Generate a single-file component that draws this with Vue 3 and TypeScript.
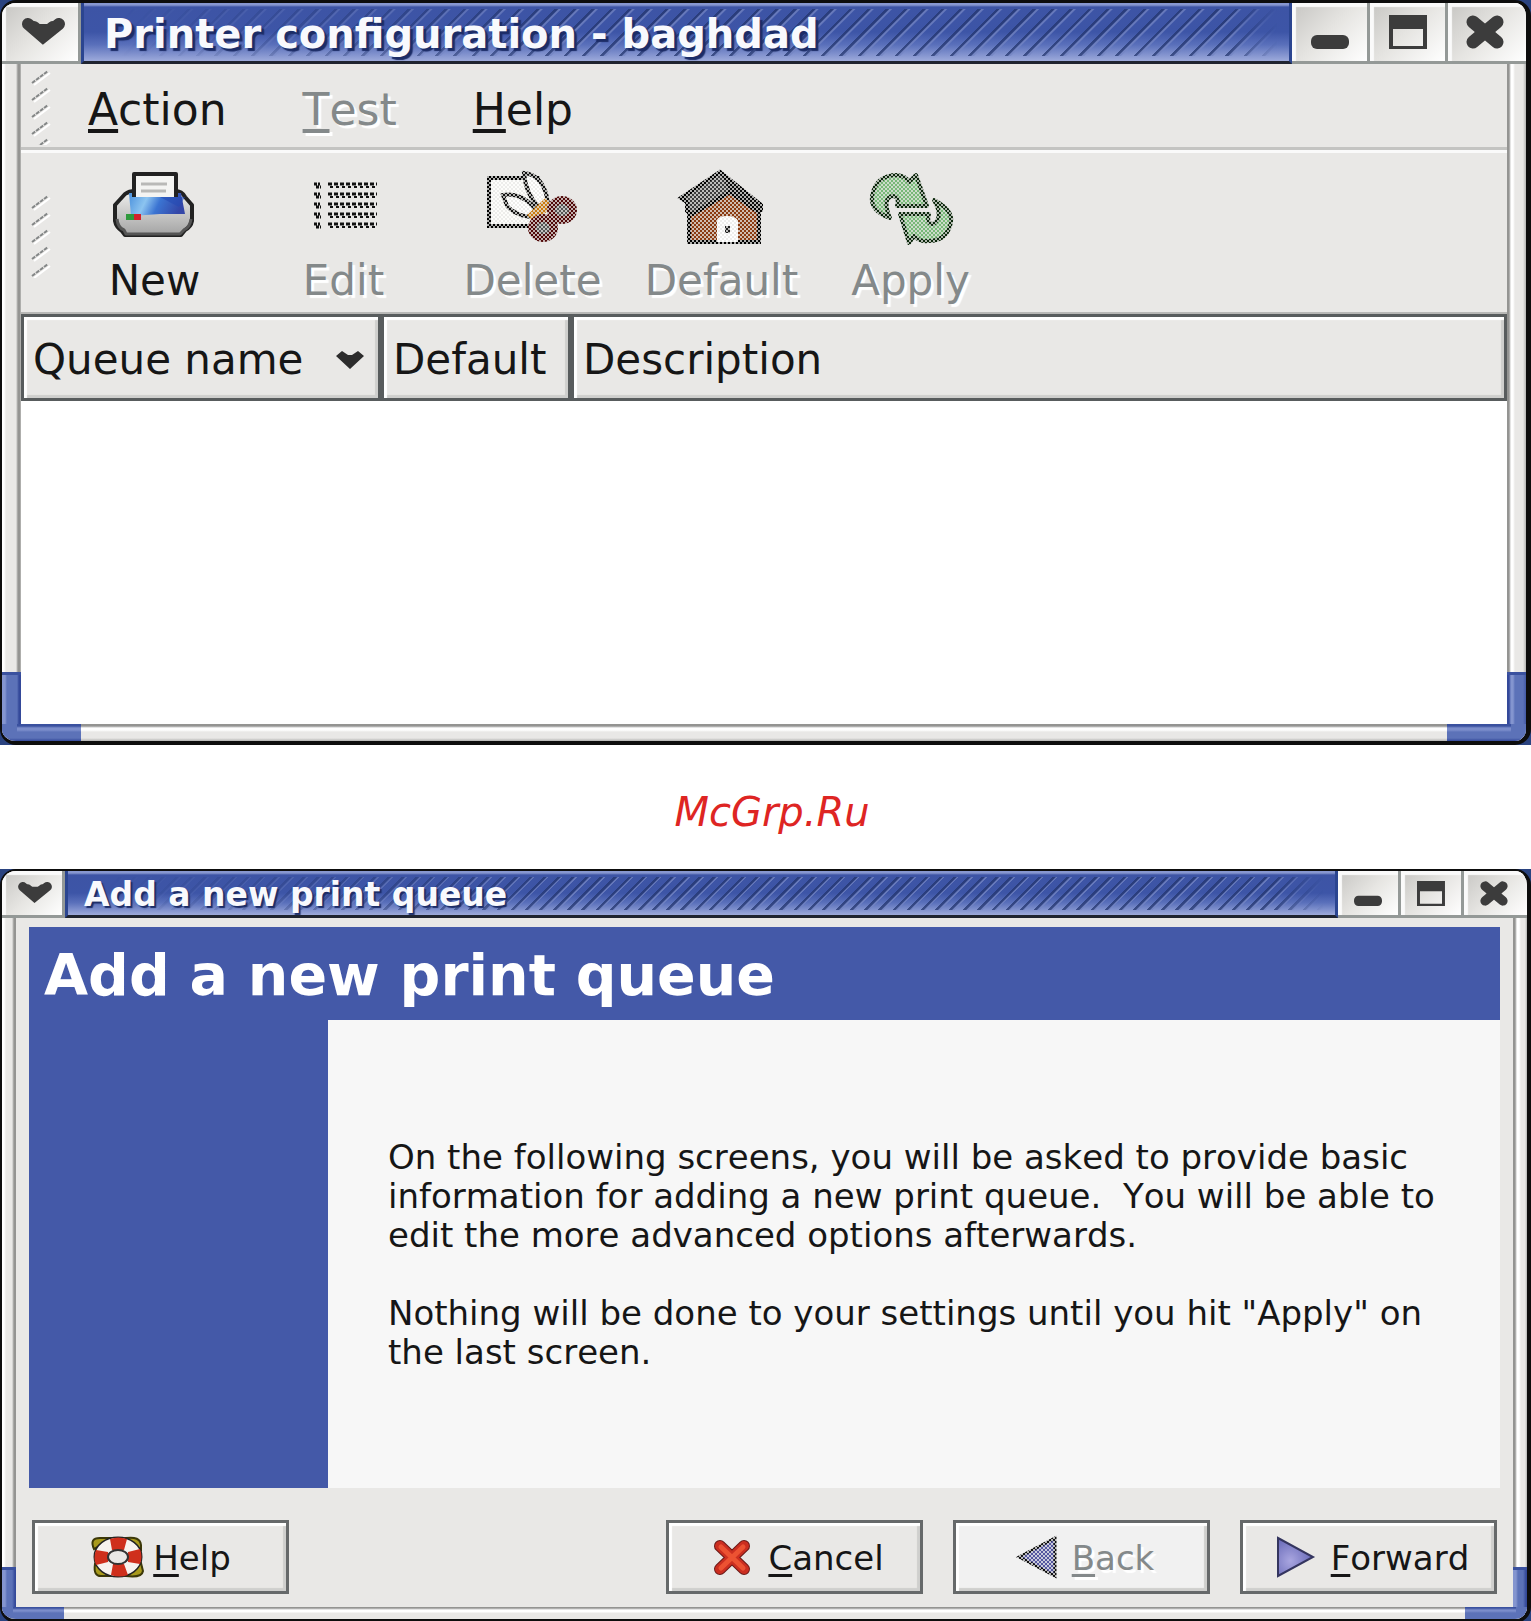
<script setup lang="ts">
interface MenuEntry {
  key: string
  rest: string
  disabled: boolean
}

interface Tool {
  id: string
  label: string
  disabled: boolean
}

interface WizardButton {
  id: string
  key: string
  rest: string
  disabled: boolean
}

const menus: MenuEntry[] = [
  { key: 'A', rest: 'ction', disabled: false },
  { key: 'T', rest: 'est', disabled: true },
  { key: 'H', rest: 'elp', disabled: false },
]

const tools: Tool[] = [
  { id: 'new', label: 'New', disabled: false },
  { id: 'edit', label: 'Edit', disabled: true },
  { id: 'delete', label: 'Delete', disabled: true },
  { id: 'default', label: 'Default', disabled: true },
  { id: 'apply', label: 'Apply', disabled: true },
]

const wizardButtons: WizardButton[] = [
  { id: 'help', key: 'H', rest: 'elp', disabled: false },
  { id: 'cancel', key: 'C', rest: 'ancel', disabled: false },
  { id: 'back', key: 'B', rest: 'ack', disabled: true },
  { id: 'forward', key: 'F', rest: 'orward', disabled: false },
]

const controls: string[] = ['Minimize', 'Maximize', 'Close']

const intro: string =
  'On the following screens, you will be asked to provide basic\n' +
  'information for adding a new print queue.  You will be able to\n' +
  'edit the more advanced options afterwards.\n\n' +
  'Nothing will be done to your settings until you hit "Apply" on\n' +
  'the last screen.'
</script>

<template>
  <div class="page">
    <svg class="defs" width="0" height="0" aria-hidden="true">
      <defs>
        <pattern id="checker" width="4" height="4" patternUnits="userSpaceOnUse">
          <rect width="2" height="2" fill="#fff" />
          <rect x="2" y="2" width="2" height="2" fill="#fff" />
        </pattern>
        <mask id="stipple" maskUnits="userSpaceOnUse" x="0" y="0" width="100" height="80">
          <rect width="100" height="80" fill="#fff" fill-opacity="0.25" />
          <rect width="100" height="80" fill="url(#checker)" />
        </mask>
        <linearGradient id="screen" x1="0" y1="0" x2="1" y2="0.2">
          <stop offset="0" stop-color="#4a90dc" />
          <stop offset="0.35" stop-color="#8cc4f0" />
          <stop offset="0.6" stop-color="#3b74d2" />
          <stop offset="1" stop-color="#3447a8" />
        </linearGradient>
        <linearGradient id="shell" x1="0" y1="0" x2="0" y2="1">
          <stop offset="0" stop-color="#f0f0ee" />
          <stop offset="1" stop-color="#a3a3a3" />
        </linearGradient>
        <radialGradient id="arrow" cx="0.35" cy="0.6" r="0.7">
          <stop offset="0" stop-color="#a9a6e0" />
          <stop offset="1" stop-color="#6264b4" />
        </radialGradient>
      </defs>
    </svg>

    <div class="backdrop">
      <section class="window main">
        <header class="titlebar">
          <button class="control menu" aria-label="Window menu">
            <svg viewBox="0 0 45 28"><path d="M7 6 22 19 38 6M13 9 22 17 32 9" fill="#3c3c3c" stroke="#3c3c3c" stroke-width="12" stroke-linecap="round" /></svg>
          </button>
          <h1 class="caption"><span>Printer configuration - baghdad</span></h1>
          <button v-for="c in controls" :key="c" class="control" :aria-label="c">
            <svg viewBox="0 0 38 34">
              <rect v-if="c === 'Minimize'" y="20" width="38" height="14" rx="6" fill="#3c3c3c" />
              <path v-else-if="c === 'Maximize'" d="M0 0H38V34H0ZM4 14V31H34V14Z" fill="#3c3c3c" fill-rule="evenodd" />
              <path v-else d="M7 7 31 27M31 7 7 27M15 17H23" stroke="#3c3c3c" stroke-width="13" stroke-linecap="round" />
            </svg>
          </button>
        </header>

        <div class="middle">
          <div class="rail left"><i class="corner"></i></div>
          <main class="content">
            <nav class="menubar">
              <svg class="grip" width="20" height="76" viewBox="0 0 20 76">
                <g v-for="n in 5" :key="n">
                  <path :d="`M3 ${n * 17 - 1}L19 ${n * 17 - 13}`" stroke="#fff" stroke-width="2" />
                  <path :d="`M1 ${n * 17 - 3}L17 ${n * 17 - 15}`" stroke="#858888" stroke-width="2" stroke-dasharray="4 1" />
                </g>
              </svg>
              <button v-for="m in menus" :key="m.key" class="menu-item" :disabled="m.disabled">
                <span class="mnemonic">{{ m.key }}</span>{{ m.rest }}
              </button>
            </nav>

            <div class="toolbar">
              <svg class="grip" width="20" height="84" viewBox="0 0 20 84">
                <g v-for="n in 5" :key="n">
                  <path :d="`M3 ${n * 17 - 1}L19 ${n * 17 - 13}`" stroke="#fff" stroke-width="2" />
                  <path :d="`M1 ${n * 17 - 3}L17 ${n * 17 - 15}`" stroke="#858888" stroke-width="2" stroke-dasharray="4 1" />
                </g>
              </svg>
              <button v-for="t in tools" :key="t.id" class="tool" :disabled="t.disabled">
                <svg width="100" height="80" viewBox="0 0 100 80" aria-hidden="true">
                  <g v-if="t.id === 'new'" stroke-linejoin="round">
                    <path d="M20 28Q24 25 30 25H70Q77 25 80 31L87 39V55Q86 61 80 64L76 69H20L17 65Q11 61 10 55V39Z" fill="url(#shell)" stroke="#222" stroke-width="4" />
                    <path d="M12 53Q13 62 19 64L21 68H75L79 64Q85 61 86 53" fill="none" stroke="#555" stroke-width="3" />
                    <path d="M24 27H76L80 48H55L26 50Z" fill="url(#screen)" />
                    <path d="M55 31 74 41 80 31Z" fill="#244bb4" opacity="0.6" />
                    <path d="M29 31V8H71V31Z" fill="#f4f4f2" />
                    <path d="M29 31V8H71V31" fill="none" stroke="#222" stroke-width="4" />
                    <path d="M36 18H62M36 25H61" stroke="#b9b9b7" stroke-width="3" />
                    <rect x="21" y="48" width="8" height="6" fill="#2f9a3c" />
                    <rect x="29" y="48" width="7" height="6" fill="#d3212b" />
                  </g>
                  <g v-else-if="t.id === 'edit'" stroke="#111" fill="none">
                    <g v-for="n in 5" :key="n">
                      <path :d="`M20 ${n * 10 + 8}h6M22 ${n * 10 + 11}h5`" stroke-width="3" stroke-dasharray="3 1" />
                      <path :d="`M34 ${n * 10 + 8}h49`" stroke-width="3" stroke-dasharray="4 2" />
                      <path :d="`M36 ${n * 10 + 11}h46`" stroke-width="2" stroke-dasharray="3 3" />
                    </g>
                  </g>
                  <g v-else-if="t.id === 'delete'" mask="url(#stipple)">
                    <rect x="6" y="12" width="49" height="48" fill="#fdfdfb" stroke="#000" stroke-width="4" />
                    <path d="M20 29Q36 26 50 40L55 51Q35 52 24 40Z" fill="#fff" stroke="#111" stroke-width="4" />
                    <path d="M41 7Q61 9 65 37L56 41Q43 29 41 7Z" fill="#fff" stroke="#111" stroke-width="4" />
                    <path d="M48 53 66 36" stroke="#c87a10" stroke-width="11" />
                    <ellipse cx="79" cy="44" rx="11" ry="10" fill="#555" stroke="#500808" stroke-width="8" />
                    <ellipse cx="60" cy="62" rx="11" ry="10" fill="#555" stroke="#500808" stroke-width="8" />
                  </g>
                  <g v-else-if="t.id === 'default'" mask="url(#stipple)">
                    <path d="M17 36 50 14 87 38V76H17Z" fill="#8a3a10" stroke="#000" stroke-width="4" />
                    <path d="M9 32 48 6 89 39V44L85 45 58 26 21 48 15 45V36Z" fill="#3c3c3c" stroke="#000" stroke-width="4" />
                    <path d="M48 6 89 39V44L58 26Z" fill="#0c0c0c" />
                    <path d="M45 76V54Q46 50 55 50T66 55V76Z" fill="#fff" />
                    <rect x="53" y="60" width="5" height="7" fill="#222" />
                  </g>
                  <g v-else mask="url(#stipple)" fill="#78b878" stroke="#0c280c" stroke-width="4" stroke-linejoin="round">
                    <path d="M29 52Q9 45 11 30Q15 9 36 9Q45 10 48 16L55 9L66 40H36Q39 30 31 30Q21 33 29 52Z" />
                    <path d="M73 34Q92 44 90 56Q86 76 66 75Q59 76 53 70L48 77L39 48H68Q65 58 72 58Q83 52 73 34Z" />
                  </g>
                </svg>
                <span>{{ t.label }}</span>
              </button>
            </div>

            <div class="list">
              <table>
                <colgroup><col class="col-name" /><col class="col-default" /><col /></colgroup>
                <thead>
                  <tr>
                    <th scope="col">
                      <div class="sortable">
                        <span>Queue name</span>
                        <svg width="28" height="19" viewBox="0 0 28 19"><path d="M0 6 6 1 12 5 16 5 22 1 28 6 14 19Z" fill="#2c2c2c" /></svg>
                      </div>
                    </th>
                    <th scope="col">Default</th>
                    <th scope="col">Description</th>
                  </tr>
                </thead>
              </table>
            </div>
          </main>
          <div class="rail right"><i class="corner"></i></div>
        </div>
        <footer class="bottom"><i class="corner"></i><i class="corner"></i></footer>
      </section>
    </div>

    <p class="site">McGrp.Ru</p>

    <div class="backdrop">
      <section class="window wizard">
        <header class="titlebar">
          <button class="control menu" aria-label="Window menu">
            <svg viewBox="0 0 45 28"><path d="M7 6 22 19 38 6M13 9 22 17 32 9" fill="#3c3c3c" stroke="#3c3c3c" stroke-width="12" stroke-linecap="round" /></svg>
          </button>
          <h1 class="caption"><span>Add a new print queue</span></h1>
          <button v-for="c in controls" :key="c" class="control" :aria-label="c">
            <svg viewBox="0 0 38 34">
              <rect v-if="c === 'Minimize'" y="20" width="38" height="14" rx="6" fill="#3c3c3c" />
              <path v-else-if="c === 'Maximize'" d="M0 0H38V34H0ZM4 14V31H34V14Z" fill="#3c3c3c" fill-rule="evenodd" />
              <path v-else d="M7 7 31 27M31 7 7 27M15 17H23" stroke="#3c3c3c" stroke-width="13" stroke-linecap="round" />
            </svg>
          </button>
        </header>

        <div class="middle">
          <div class="rail left"><i class="corner"></i></div>
          <main class="content">
            <div class="druid">
              <h2>Add a new print queue</h2>
              <div class="druid-body">
                <div class="side"></div>
                <p class="intro">{{ intro }}</p>
              </div>
            </div>
            <div class="actions">
              <button v-for="b in wizardButtons" :key="b.id" class="push" :class="b.id" :disabled="b.disabled">
                <svg width="54" height="44" viewBox="0 0 54 44" aria-hidden="true">
                  <g v-if="b.id === 'help'">
                    <g fill="#a89a1c" stroke="#3c3808" stroke-width="2">
                      <path d="M4 14Q-1 3 10 3L22 3Z" /><path d="M36 3Q50 1 51 10V15Z" />
                      <path d="M5 29Q3 42 12 41L22 41Z" /><path d="M36 41Q52 43 53 36L51 28Z" />
                    </g>
                    <ellipse cx="28" cy="22" rx="17" ry="13" fill="none" stroke="#222" stroke-width="15" />
                    <ellipse cx="28" cy="22" rx="17" ry="13" fill="none" stroke="#f7f2ee" stroke-width="12" />
                    <path d="M20 4Q28 1 37 4L34 15H22ZM21 40Q29 43 38 40L34 29H23ZM6 15Q3 23 6 30L18 27V17ZM50 14Q53 22 50 29L38 27V17Z" fill="#cf2f1c" />
                    <ellipse cx="28" cy="22" rx="10" ry="7" fill="#e9e8e6" stroke="#333" stroke-width="2" />
                  </g>
                  <g v-else-if="b.id === 'cancel'" fill="none" stroke-linecap="round">
                    <path d="M15 11 39 34M39 11 15 34" stroke="#6a1a18" stroke-width="12" />
                    <path d="M15 11 39 34M39 11 15 34" stroke="#cb2e20" stroke-width="10" />
                    <path d="M16 12 38 33M38 12 16 33" stroke="#ec5232" stroke-width="5" />
                  </g>
                  <g v-else-if="b.id === 'back'" mask="url(#stipple)">
                    <path d="M10 22 46 3V41Z" fill="#5456a0" stroke="#111" stroke-width="3" />
                  </g>
                  <path v-else d="M10 3 45 22 10 41Z" fill="url(#arrow)" stroke="#34355f" stroke-width="2" />
                </svg>
                <span class="push-label"><span class="mnemonic">{{ b.key }}</span>{{ b.rest }}</span>
              </button>
            </div>
          </main>
          <div class="rail right"><i class="corner"></i></div>
        </div>
        <footer class="bottom"><i class="corner"></i><i class="corner"></i></footer>
      </section>
    </div>
  </div>
</template>

<style>
body {
  margin: 0;
  background: #fff;
}
</style>

<style scoped>
.page {
  font-family: 'DejaVu Sans', sans-serif;
  font-kerning: none;
  color: #161616;
}
.page * {
  box-sizing: border-box;
}
.defs {
  position: absolute;
}
button {
  margin: 0;
  padding: 0;
  border: 0;
  background: none;
  font: inherit;
  font-kerning: none;
  color: inherit;
}
button:disabled {
  color: #84898a;
  text-shadow: 3px 3px 1px #fff;
}
h1,
h2,
p {
  margin: 0;
}

.backdrop {
  background: #2a4380;
}
.window {
  --face: #e9e8e6;
  border: solid #0d0d0d;
  border-width: 3px 5px 4px 2px;
  border-radius: 16px;
  overflow: hidden;
  background: var(--face);
}

/* Title bar */
.titlebar {
  display: flex;
  align-items: stretch;
  height: 61px;
}
.caption {
  flex: 1;
  position: relative;
  display: flex;
  align-items: center;
  border-bottom: 3px solid #1f2430;
  border-left: 3px solid #2b4590;
  border-right: 3px solid #2b4590;
  background: linear-gradient(#8797d0 0, #8797d0 2px, #3d54a5 4px, #3d55a7 50%, #5a70bb 72%, #9daadb 100%);
  padding: 3px 0 0 20px;
  font-size: 40px;
  line-height: 50px;
  font-weight: bold;
  color: #f8f9fd;
  text-shadow: 3px 3px 1px #1c2c66;
}
.caption::before {
  content: '';
  position: absolute;
  inset: 6px 12px 5px 0;
  background: repeating-linear-gradient(135deg, transparent 0 8px, #24366f 8px 10px, #7485c2 11px 12px, transparent 13px);
  mask-image: linear-gradient(90deg, transparent 3%, #000 40%, #000 96%, transparent);
  opacity: 0.75;
}
.caption span {
  position: relative;
}
.control {
  display: flex;
  align-items: center;
  justify-content: center;
  width: 78px;
  border: solid #949997;
  border-width: 0 3px 3px 0;
  background: linear-gradient(135deg, #c6c5c2, #e6e5e2 50%, #fff);
  box-shadow: inset 4px 4px 1px #fafafa;
}
.control:last-child {
  border-right: 0;
  padding-right: 4px;
}
.control svg {
  width: 38px;
  height: 34px;
}
.control.menu {
  width: 79px;
  padding-left: 6px;
}
.control.menu svg {
  width: 45px;
  height: 28px;
}

/* Frame */
.middle {
  display: flex;
}
.content {
  flex: 1;
  min-width: 0;
}
.rail {
  display: flex;
  flex-direction: column;
  justify-content: flex-end;
  width: 19px;
  background: linear-gradient(90deg, #fff 0 2px, #e9e8e6 4px 14px, #949492 16px 18px, #c8c8c6);
}
.rail.right {
  background: linear-gradient(90deg, #949492 0 2px, #fff 4px 6px, #e9e8e6 8px 16px, #b4b4b2);
}
.rail .corner {
  height: 52px;
  border-top: 3px solid #3a519f;
  background: linear-gradient(90deg, #8495cf 0 3px, #5c72b8 5px 15px, #34499a 17px);
}
.rail.right .corner {
  background: linear-gradient(90deg, #34499a 0 2px, #8495cf 4px 6px, #5c72b8 8px 16px, #4258a4);
}
.bottom {
  display: flex;
  justify-content: space-between;
  height: 17px;
  background: linear-gradient(#949492 0 2px, #fff 4px 6px, #e9e8e6 8px 14px, #b4b4b2);
}
.bottom .corner {
  width: 79px;
  background:
    linear-gradient(#5c72b8, #5c72b8) 0 0 / 15px 12px no-repeat,
    linear-gradient(#3a519f 0 2px, #7b8dcb 4px 6px, #5c72b8 8px 14px, #34499a);
}
.bottom .corner:last-child {
  background-position: right top, 0 0;
}

/* Menu bar and toolbar */
.toolbar,
.list {
  font-size: 42px;
  line-height: 50px;
}
.mnemonic {
  text-decoration: underline;
  text-decoration-thickness: 4px;
  text-underline-offset: 4px;
  text-decoration-skip-ink: none;
}
.grip {
  flex: none;
  margin-left: 10px;
}
.menubar {
  display: flex;
  align-items: center;
  height: 86px;
  border-bottom: 3px solid #c4c4c2;
  padding-top: 3px;
  font-size: 44px;
  line-height: 50px;
}
.menu-item {
  margin-left: 76px;
  padding-top: 5px;
}
.grip + .menu-item {
  margin-left: 37px;
}
.toolbar {
  display: flex;
  align-items: center;
  height: 164px;
  border-top: 3px solid #fafafa;
  border-bottom: 2px solid #b8b8b6;
  padding-top: 6px;
}
.tool {
  display: flex;
  flex-direction: column;
  align-items: center;
  width: 189px;
}
.grip + .tool {
  margin-left: 9px;
}
.tool svg {
  margin-bottom: 10px;
}

/* Queue list */
.list {
  min-height: 410px;
  background: #fff;
}
table {
  width: 100%;
  table-layout: fixed;
  border-spacing: 0;
}
.col-name {
  width: 360px;
}
.col-default {
  width: 190px;
}
th {
  height: 87px;
  padding: 4px 0 0 9px;
  border: 3px solid #585c5d;
  background: var(--face);
  box-shadow: inset 3px 3px 1px #fff, inset -3px -3px 1px #cfcfcd;
  text-align: left;
  font-weight: normal;
}
.sortable {
  display: flex;
  align-items: center;
  justify-content: space-between;
  padding-right: 14px;
}

.site {
  padding: 43px 0 33px 13px;
  text-align: center;
  font-size: 40px;
  line-height: 48px;
  font-style: oblique;
  color: #de2523;
}

/* Wizard window */
.wizard {
  border-width: 2px 4px 4px 2px;
}
.wizard .titlebar {
  height: 47px;
}
.wizard .caption {
  padding-left: 16px;
  font-size: 33px;
  line-height: 40px;
  text-shadow: 2px 2px 1px #1c2c66;
}
.wizard .caption::before {
  background: repeating-linear-gradient(135deg, transparent 0 6px, #24366f 6px 8px, #7485c2 9px 10px, transparent 10px);
}
.wizard .control {
  width: 63px;
}
.wizard .control svg {
  width: 30px;
  height: 25px;
}
.wizard .control.menu svg {
  width: 36px;
  height: 22px;
}
.wizard .rail {
  width: 14px;
  background: linear-gradient(90deg, #fff 0 2px, #e9e8e6 4px 10px, #949492 12px);
}
.wizard .rail.right {
  background: linear-gradient(90deg, #949492 0 2px, #fff 4px 6px, #e9e8e6 8px 12px, #b4b4b2);
}
.wizard .rail .corner {
  height: 40px;
  background: linear-gradient(90deg, #8495cf 0 3px, #5c72b8 5px 10px, #34499a 13px);
}
.wizard .bottom {
  height: 12px;
  background: linear-gradient(#949492 0 1px, #fff 3px 5px, #e9e8e6 6px);
}
.wizard .bottom .corner {
  width: 62px;
  background:
    linear-gradient(#5c72b8, #5c72b8) 0 0 / 11px 10px no-repeat,
    linear-gradient(#3a519f 0 1px, #7b8dcb 3px 4px, #5c72b8 6px);
}
.wizard .bottom .corner:last-child {
  background-position: right top, 0 0;
}
.druid {
  margin: 9px 13px 0;
  background: #4459a8;
}
h2 {
  padding-left: 15px;
  height: 93px;
  font-size: 57px;
  line-height: 96px;
  font-weight: bold;
  color: #fff;
}
.druid-body {
  display: flex;
  min-height: 468px;
}
.side {
  width: 299px;
}
.intro {
  flex: 1;
  padding: 118px 20px 0 60px;
  background: #f7f7f7;
  font-size: 34px;
  line-height: 39px;
  white-space: pre;
}
.actions {
  display: flex;
  gap: 30px;
  padding: 32px 16px 13px;
}
.push {
  display: flex;
  align-items: center;
  justify-content: center;
  gap: 9px;
  width: 257px;
  height: 74px;
  border: 3px solid #66696a;
  box-shadow: inset 3px 3px 1px #fff, inset -3px -3px 1px #cfcfcd;
  font-size: 34px;
  line-height: 40px;
}
.push.help {
  margin-right: auto;
}
.push:disabled {
  background: #f1f1f1;
}
.push-label {
  padding-top: 2px;
}
.push .mnemonic {
  text-decoration-thickness: 3px;
}
</style>
